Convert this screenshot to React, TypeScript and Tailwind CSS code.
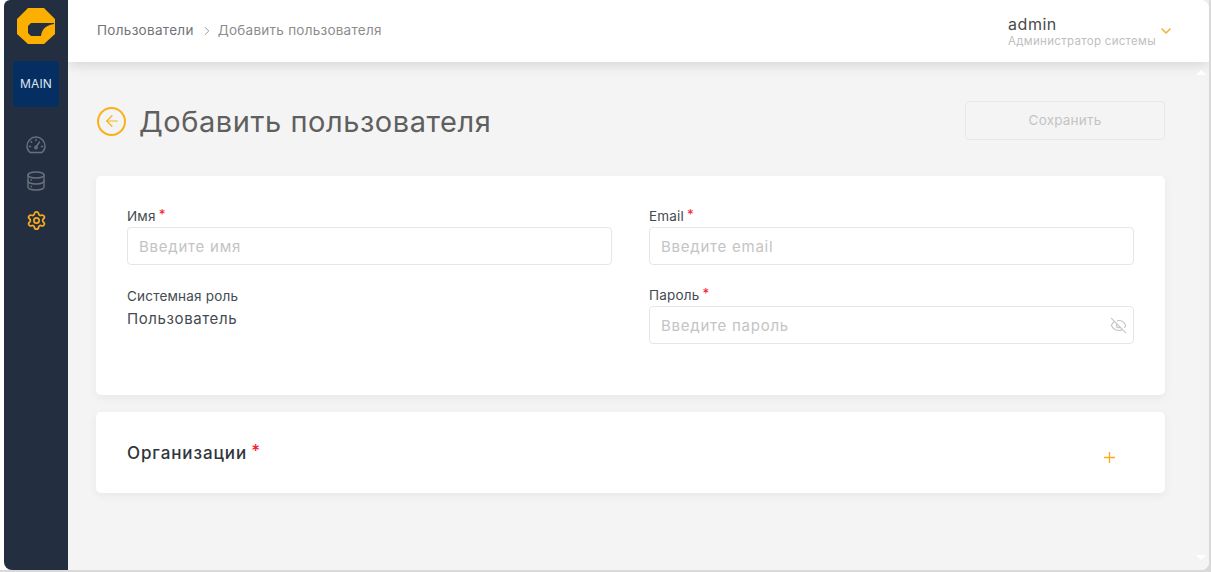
import React from "react";
import { Settings, ChevronDown, ChevronRight, ArrowLeft, EyeOff } from "lucide-react";

function Label({ text, req }: { text: string; req?: boolean }) {
  return (
    <div className="h-[22px] text-[13.5px] leading-[22px] text-[#444a52] tracking-[0.2px]">
      {text}
      {req && <span className="ml-[3px] text-[#f5222d] relative top-[-2px]">*</span>}
    </div>
  );
}

function Field({ placeholder, eye }: { placeholder: string; eye?: boolean }) {
  return (
    <div className="h-[38px] border border-[#e6e6e6] rounded-[4px] bg-white flex items-center justify-between pl-[11px] pr-[6px]">
      <span className="text-[15px] leading-[38px] pt-[1px] text-[#c4c4c4] tracking-[0.75px]">{placeholder}</span>
      {eye && <EyeOff size={17} strokeWidth={1.6} className="text-[#c4c4c4]" />}
    </div>
  );
}

export default function App() {
  return (
    <div className="h-[572px] w-[1211px] overflow-hidden bg-[#d9d9d9] font-['Inter','Noto_Sans',sans-serif]">
      <div className="h-[570px] w-[1209px] flex bg-white rounded-br-[8px]">
        <div className="w-[4px] shrink-0 bg-white" />
        <aside className="w-[64px] shrink-0 bg-[#232f41] rounded-tl-[6px] rounded-bl-[8px] flex flex-col items-center pt-[8px]">
          <svg width="38" height="38" viewBox="0 0 38 38">
            <path fillRule="evenodd" fill="#fbb000" d="M11 0H27L38 11V26L27 36H11L0 26V11ZM14 15H37V16C30 17 25 20 24 28H14L11 25V18Z" />
          </svg>
          <div className="mt-[15px] w-[46px] h-[46px] rounded-[4px] bg-[#052e63] flex items-center justify-center text-[12px] text-[#dfe6ef] tracking-[0.1px]">
            MAIN
          </div>
          <svg width="20" height="20" viewBox="0 0 20 20" fill="none" stroke="#69717d" strokeWidth="1.4" strokeLinecap="round" strokeLinejoin="round" className="mt-[28px]">
            <path d="M4 17.5H16C18 15.8 19 13.4 19 11A9 9 0 0 0 1 11C1 13.4 2 15.8 4 17.5Z" />
            <path d="M10 12L13.5 7" />
            <circle cx="10" cy="12.5" r="1.2" />
            <path d="M10 4.5V5.5M5 6.5L5.7 7.2M3.5 11.5H4.5M15.5 11.5H16.5" />
          </svg>
          <svg width="18" height="20" viewBox="0 0 18 20" fill="none" stroke="#69717d" strokeWidth="1.4" strokeLinecap="round" className="mt-[16px]">
            <ellipse cx="9" cy="4" rx="8" ry="3" />
            <path d="M1 4V16C1 17.7 4.6 19 9 19S17 17.7 17 16V4" />
            <path d="M1 10C1 11.7 4.6 13 9 13S17 11.7 17 10" />
            <path d="M4 9H4.5M4 15.5H4.5" />
          </svg>
          <Settings size={21} strokeWidth={2} className="mt-[19px] text-[#f5a91f]" />
        </aside>
        <div className="relative flex-1 flex flex-col bg-[#f4f4f4] rounded-br-[8px] overflow-hidden">
          <header className="h-[62px] shrink-0 bg-white shadow-[0_2px_14px_rgba(0,0,0,0.14)] rounded-tr-[8px] flex items-center pl-[29px] pr-[35px] pb-[1px] z-10">
            <span className="text-[13.5px] text-[#70757b] tracking-[0.3px]">Пользователи</span>
            <ChevronRight size={14} strokeWidth={1.5} className="ml-[6px] mr-[4px] text-[#8a8a8a]" />
            <span className="text-[13.5px] text-[#8d8d8d] tracking-[0.25px]">Добавить пользователя</span>
            <div className="ml-auto flex flex-col mr-[2px] pt-[1px]">
              <span className="text-[16px] leading-[20px] text-[#4a4a4a] tracking-[0.5px]">admin</span>
              <span className="text-[11.5px] leading-[14px] text-[#c0c0c0] tracking-[0.3px]">Администратор системы</span>
            </div>
            <ChevronDown size={16} strokeWidth={2.5} className="text-[#f5b23c]" />
          </header>

          <main className="flex-1 pl-[28px] pr-[44px] pt-[39px]">
            <div className="h-[39px] flex items-center">
              <div className="ml-[1px] mt-[1px] w-[29px] h-[29px] rounded-full border-2 border-[#fbb01a] flex items-center justify-center">
                <ArrowLeft size={18} strokeWidth={1.6} className="text-[#fbb01a]" />
              </div>
              <h1 className="ml-[13px] mt-[2px] text-[29px] font-normal text-[#5f5f5f] tracking-[0.55px]">Добавить пользователя</h1>
              <button className="ml-auto w-[200px] h-[39px] border border-[#e8e8e8] rounded-[4px] text-[13.5px] text-[#c4c4c4] tracking-[0.2px]">
                Сохранить
              </button>
            </div>

            <section className="mt-[36px] h-[219px] bg-white rounded-[5px] shadow-[0_3px_10px_rgba(0,0,0,0.05)] pt-[29px] px-[31px] grid grid-cols-[485px_485px] gap-x-[37px] content-start">
              <div>
                <Label text="Имя" req />
                <Field placeholder="Введите имя" />
              </div>
              <div>
                <Label text="Email" req />
                <Field placeholder="Введите email" />
              </div>
              <div className="mt-[20px]">
                <Label text="Системная роль" />
                <div className="text-[15px] leading-[24px] text-[#444a52] tracking-[0.6px]">Пользователь</div>
              </div>
              <div className="mt-[19px]">
                <Label text="Пароль" req />
                <Field placeholder="Введите пароль" eye />
              </div>
            </section>

            <section className="mt-[17px] h-[81px] bg-white rounded-[5px] shadow-[0_3px_10px_rgba(0,0,0,0.05)] pl-[31px] pr-[50px] flex items-start justify-between">
              <div className="mt-[29px] text-[17px] leading-[24px] font-medium text-[#30353c] tracking-[0.9px]">
                Организации<span className="ml-[4px] text-[#f5222d] relative top-[-2px]">*</span>
              </div>
              <svg width="11" height="11" viewBox="0 0 11 11" stroke="#fbab1a" strokeWidth="1.3" className="mt-[40px]">
                <path d="M5.5 0V11M0 5.5H11" />
              </svg>
            </section>
          </main>

          <div className="absolute right-[3px] top-[70px] w-0 h-0 border-x-[5px] border-x-transparent border-b-[5px] border-b-white z-20" />
          <div className="absolute right-[3px] bottom-[10px] w-0 h-0 border-x-[5px] border-x-transparent border-t-[5px] border-t-white" />
        </div>
      </div>
    </div>
  );
}
